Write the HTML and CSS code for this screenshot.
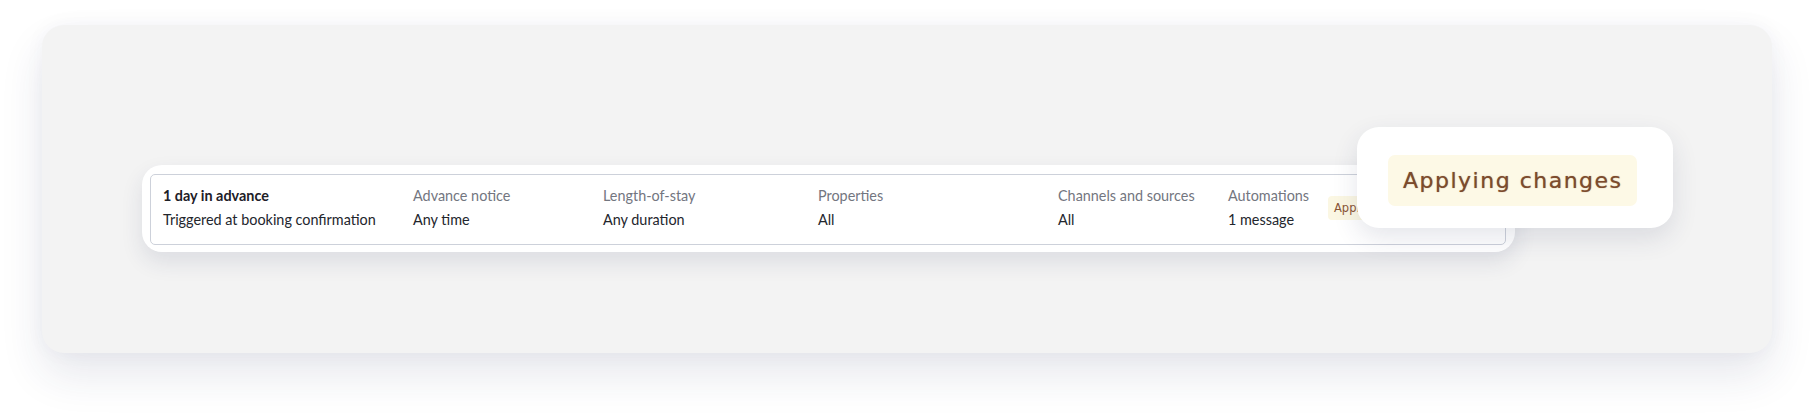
FILE: index.html
```html
<!DOCTYPE html>
<html lang="en">
<head>
  <meta charset="UTF-8">
  <meta name="viewport" content="width=device-width, initial-scale=1.0">
  <title>Applying changes</title>
  <link rel="stylesheet" href="styles.css">
</head>
<body>
  <div class="stage">
    <div class="rule-card">
      <div class="rule-row">
        <div class="cell">
          <span class="title">1 day in advance</span>
          <span class="value">Triggered at booking confirmation</span>
        </div>
        <div class="cell">
          <span class="label">Advance notice</span>
          <span class="value">Any time</span>
        </div>
        <div class="cell">
          <span class="label">Length-of-stay</span>
          <span class="value">Any duration</span>
        </div>
        <div class="cell">
          <span class="label">Properties</span>
          <span class="value">All</span>
        </div>
        <div class="cell">
          <span class="label">Channels and sources</span>
          <span class="value">All</span>
        </div>
        <div class="cell">
          <span class="label">Automations</span>
          <span class="value">1 message</span>
        </div>
        <div class="cell status">
          <span class="badge">Applying changes</span>
        </div>
      </div>
    </div>

    <div class="zoom">
      <span class="zoom-badge">Applying changes</span>
    </div>
  </div>
</body>
</html>
```

FILE: styles.css
```css
html,
body {
  height: 100%;
}

body {
  margin: 0;
  padding: 25px 43px 60px 42px;
  box-sizing: border-box;
  background: #ffffff;
  font-family: Lato, "Noto Sans", sans-serif;
}

.stage {
  position: relative;
  height: 328px;
  padding: 140px 0 0 100px;
  box-sizing: border-box;
  background: #f3f3f3;
  border-radius: 22px;
  box-shadow: 0 22px 44px rgba(40, 50, 90, 0.11), 0 0 20px rgba(40, 50, 90, 0.04);
}

.rule-card {
  width: 1373px;
  box-sizing: border-box;
  padding: 9px 9px 7px 8px;
  background: #ffffff;
  border-radius: 20px;
  box-shadow: 0 10px 22px rgba(40, 50, 90, 0.11);
}

.rule-row {
  display: grid;
  grid-template-columns: 250px 190px 215px 240px 170px 100px 1fr;
  padding: 11px 12px 14px;
  border: 1px solid #cdd1da;
  border-radius: 5px;
}

.cell {
  display: flex;
  flex-direction: column;
  gap: 4px;
  font-size: 14.4px;
  line-height: 20px;
}

.title {
  font-weight: 700;
  color: #1d2027;
}

.label {
  color: #73767f;
}

.value {
  color: #23262d;
}

.status {
  justify-content: center;
}

.badge {
  align-self: flex-start;
  padding: 3px 6px;
  font-family: "DejaVu Sans", sans-serif;
  font-size: 11.5px;
  line-height: 18px;
  color: #8a5536;
  background: #fbf7e3;
  border-radius: 4px;
  white-space: nowrap;
}

.zoom {
  position: absolute;
  left: 1315px;
  top: 102px;
  width: 316px;
  height: 101px;
  box-sizing: border-box;
  padding: 28px 0 0 31px;
  background: #ffffff;
  border-radius: 22px;
  box-shadow: 0 10px 26px rgba(40, 50, 90, 0.12);
}

.zoom-badge {
  display: inline-block;
  width: 249px;
  height: 51px;
  box-sizing: border-box;
  padding-left: 15px;
  font-family: "DejaVu Sans", sans-serif;
  font-size: 22px;
  line-height: 51px;
  letter-spacing: 1.5px;
  color: #7c4b2c;
  text-shadow: 0 0 1px rgba(124, 75, 44, 0.7);
  background: #fdf9e6;
  border-radius: 7px;
  white-space: nowrap;
}
```
